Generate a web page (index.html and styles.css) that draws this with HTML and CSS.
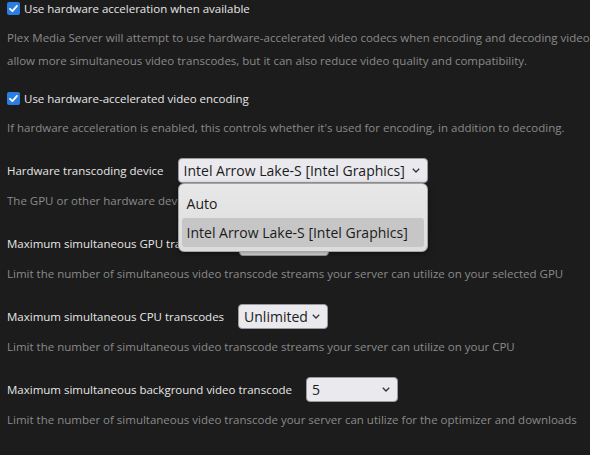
FILE: index.html
```html
<!DOCTYPE html>
<html lang="en">
<head>
  <meta charset="UTF-8">
  <title>Transcoder settings</title>
  <link rel="stylesheet" href="styles.css">
</head>
<body>
  <div class="settings">

    <!-- hardware acceleration -->
    <div class="setting">
      <label class="check-row">
        <span class="checkbox">
          <svg width="13" height="13" viewBox="0 0 13 13"><path d="M3 6.8 L5.4 9.2 L10 3.9" fill="none" stroke="#fff" stroke-width="1.8" stroke-linecap="round" stroke-linejoin="round"/></svg>
        </span>
        Use hardware acceleration when available
      </label>
      <p class="desc first">Plex Media Server will attempt to use hardware-accelerated video codecs when encoding and decoding video. Hardware acceleration can<br>allow more simultaneous video transcodes, but it can also reduce video quality and compatibility.</p>
    </div>

    <div class="setting check-setting">
      <label class="check-row">
        <span class="checkbox">
          <svg width="13" height="13" viewBox="0 0 13 13"><path d="M3 6.8 L5.4 9.2 L10 3.9" fill="none" stroke="#fff" stroke-width="1.8" stroke-linecap="round" stroke-linejoin="round"/></svg>
        </span>
        Use hardware-accelerated video encoding
      </label>
      <p class="desc first">If hardware acceleration is enabled, this controls whether it's used for encoding, in addition to decoding.</p>
    </div>

    <!-- device -->
    <div class="setting select-setting">
      <div class="select-row">
        <span class="label">Hardware transcoding device</span>
        <div class="select-wrap">
          <div class="select device">
            <span>Intel Arrow Lake-S [Intel Graphics]</span>
            <svg class="chev" width="8" height="5" viewBox="0 0 8 5"><path d="M0.8 0.8 L4 4 L7.2 0.8" fill="none" stroke="#333" stroke-width="1.3"/></svg>
          </div>
          <ul class="popup">
            <li>Auto</li>
            <li class="selected">Intel Arrow Lake-S [Intel Graphics]</li>
          </ul>
        </div>
      </div>
      <p class="desc">The GPU or other hardware device that will be used for transcoding.</p>
    </div>

    <div class="setting select-setting">
      <div class="select-row">
        <span class="label">Maximum simultaneous GPU transcodes</span>
        <div class="select narrow">
          <span>Unlimited</span>
          <svg class="chev" width="8" height="5" viewBox="0 0 8 5"><path d="M0.8 0.8 L4 4 L7.2 0.8" fill="none" stroke="#333" stroke-width="1.3"/></svg>
        </div>
      </div>
      <p class="desc">Limit the number of simultaneous video transcode streams your server can utilize on your selected GPU</p>
    </div>

    <div class="setting select-setting">
      <div class="select-row">
        <span class="label">Maximum simultaneous CPU transcodes</span>
        <div class="select narrow">
          <span>Unlimited</span>
          <svg class="chev" width="8" height="5" viewBox="0 0 8 5"><path d="M0.8 0.8 L4 4 L7.2 0.8" fill="none" stroke="#333" stroke-width="1.3"/></svg>
        </div>
      </div>
      <p class="desc">Limit the number of simultaneous video transcode streams your server can utilize on your CPU</p>
    </div>

    <div class="setting select-setting">
      <div class="select-row">
        <span class="label">Maximum simultaneous background video transcode</span>
        <div class="select number">
          <span>5</span>
          <svg class="chev" width="8" height="5" viewBox="0 0 8 5"><path d="M0.8 0.8 L4 4 L7.2 0.8" fill="none" stroke="#333" stroke-width="1.3"/></svg>
        </div>
      </div>
      <p class="desc">Limit the number of simultaneous video transcode your server can utilize for the optimizer and downloads</p>
    </div>

  </div>
</body>
</html>
```

FILE: styles.css
```css
body {
  margin: 0;
  background-color: #1c1c1c;
  font-family: "Open Sans", "Noto Sans", sans-serif;
  overflow: hidden;
  height: 455px;
}

.settings {
  padding-left: 7px;
  white-space: nowrap;
  overflow: hidden;
}

/* checkbox settings */
.check-row {
  display: flex;
  align-items: center;
  gap: 4px;
  height: 16px;
  font-size: 11.5px;
  color: #e6e6e6;
}

.checkbox {
  width: 13px;
  height: 13px;
  border-radius: 2px;
  background-color: #2a7de1;
  display: flex;
}

.check-setting {
  margin-top: 18px;
}

.desc {
  margin: 6px 0 0;
  font-size: 11.5px;
  line-height: 23px;
  color: #8a8a8a;
}

.desc.first {
  margin-top: 10px;
}

/* select settings */
.select-setting {
  margin-top: 19px;
}

.select-row {
  display: flex;
  align-items: center;
  gap: 14px;
  height: 25px;
}

.label {
  font-size: 11.5px;
  color: #e6e6e6;
}

.select-wrap {
  position: relative;
}

.select {
  box-sizing: border-box;
  height: 25px;
  display: flex;
  align-items: center;
  justify-content: space-between;
  padding: 0 7px 0 5px;
  background-color: #e9e9ee;
  border: 1px solid #9a9a9e;
  border-radius: 4px;
  font-size: 14px;
  color: #1b1b1b;
}

.select.device {
  width: 250px;
}

.select.narrow {
  width: 90px;
}

.select.number {
  width: 92px;
}

.chev {
  flex: none;
}

/* open dropdown list */
.popup {
  position: absolute;
  top: 25px;
  left: 0;
  width: 250px;
  box-sizing: border-box;
  margin: 0;
  padding: 5px 3px 4px;
  list-style: none;
  background: linear-gradient(#e8e8e8, #dcdcdc);
  border: 1px solid #a5a5a5;
  border-radius: 6px;
  box-shadow: 0 2px 6px rgba(0, 0, 0, 0.4);
  font-size: 14px;
  color: #1b1b1b;
  z-index: 2;
}

.popup li {
  height: 29px;
  line-height: 29px;
  padding-left: 5px;
  border-radius: 3px;
}

.popup li.selected {
  background-color: #c6c6c6;
}
```
